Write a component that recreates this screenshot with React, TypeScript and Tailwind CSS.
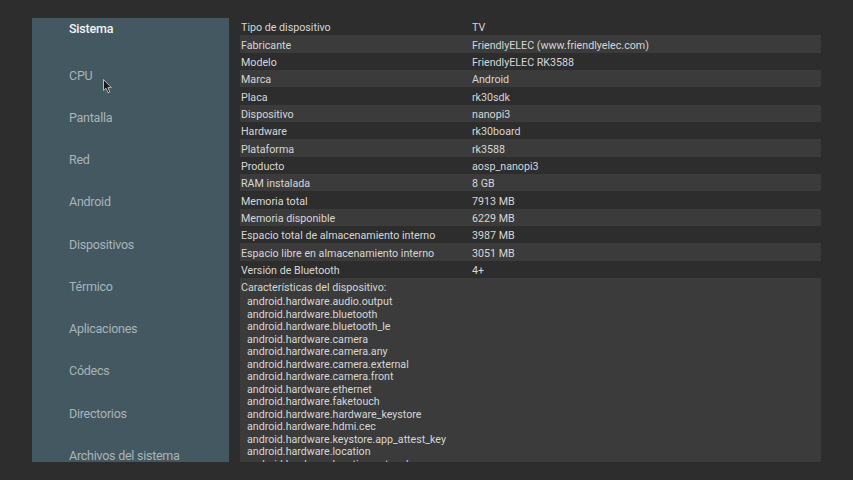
import React from "react";

const rows: [string, string][] = [
  ["Tipo de dispositivo", "TV"],
  ["Fabricante", "FriendlyELEC (www.friendlyelec.com)"],
  ["Modelo", "FriendlyELEC RK3588"],
  ["Marca", "Android"],
  ["Placa", "rk30sdk"],
  ["Dispositivo", "nanopi3"],
  ["Hardware", "rk30board"],
  ["Plataforma", "rk3588"],
  ["Producto", "aosp_nanopi3"],
  ["RAM instalada", "8 GB"],
  ["Memoria total", "7913 MB"],
  ["Memoria disponible", "6229 MB"],
  ["Espacio total de almacenamiento interno", "3987 MB"],
  ["Espacio libre en almacenamiento interno", "3051 MB"],
  ["Versión de Bluetooth", "4+"],
];

const features = [
  "android.hardware.audio.output",
  "android.hardware.bluetooth",
  "android.hardware.bluetooth_le",
  "android.hardware.camera",
  "android.hardware.camera.any",
  "android.hardware.camera.external",
  "android.hardware.camera.front",
  "android.hardware.ethernet",
  "android.hardware.faketouch",
  "android.hardware.hardware_keystore",
  "android.hardware.hdmi.cec",
  "android.hardware.keystore.app_attest_key",
  "android.hardware.location",
  "android.hardware.location.network",
];

const menu = [
  "CPU",
  "Pantalla",
  "Red",
  "Android",
  "Dispositivos",
  "Térmico",
  "Aplicaciones",
  "Códecs",
  "Directorios",
  "Archivos del sistema",
];

export default function App() {
  return (
    <div
      className="relative w-[853px] h-[480px] bg-[#2d2d2d] flex pt-[18px] pl-[32px] overflow-hidden"
      style={{ fontFamily: "Roboto, 'Noto Sans', sans-serif" }}
    >
      <div className="w-[197px] h-[444px] bg-[#435860] overflow-hidden flex flex-col pl-[37px]">
        <div className="h-[20px] pt-[2px] flex items-center text-[12.5px] tracking-[-0.2px] font-medium text-[#f2f4f5]">
          Sistema
        </div>
        <div className="mt-[15.9px] flex flex-col">
          {menu.map((m) => (
            <div
              key={m}
              className="h-[42.25px] shrink-0 pt-[2px] flex items-center text-[12.5px] tracking-[-0.25px] text-[#a9b4b9] whitespace-nowrap"
            >
              {m}
            </div>
          ))}
        </div>
      </div>

      <div className="ml-[11px] w-[581px] h-[444px] flex flex-col">
        {rows.map(([k, v], i) => (
          <div
            key={k}
            className={`h-[17.35px] shrink-0 pt-[3px] flex items-center text-[10.7px] text-[#d6d6d6] ${
              i % 2 === 1 ? "bg-[#3b3b3b]" : ""
            }`}
          >
            <div className="w-[232px] pl-[1px] whitespace-nowrap">{k}</div>
            <div className="whitespace-nowrap">{v}</div>
          </div>
        ))}
        <div className="flex-1 bg-[#3b3b3b] overflow-hidden flex flex-col">
          <div className="h-[17px] shrink-0 pt-[3px] flex items-center pl-[1px] text-[10.7px] text-[#d6d6d6]">
            Características del dispositivo:
          </div>
          <div className="flex flex-col pl-[7px] pt-[1px]">
            {features.map((f) => (
              <div
                key={f}
                className="h-[12.5px] shrink-0 leading-[12.5px] text-[10.65px] text-[#d6d6d6] whitespace-nowrap"
              >
                {f}
              </div>
            ))}
          </div>
        </div>
      </div>

      <svg
        className="absolute left-[103px] top-[79px]"
        width="10"
        height="15"
        viewBox="0 0 10 15"
      >
        <path
          d="M0.5 0.5 L0.5 11.5 L3 9.2 L5 13.8 L6.8 13 L4.9 8.6 L8.3 8.6 Z"
          fill="#1a1a1a"
          stroke="#c8c8c8"
          strokeWidth="0.9"
          strokeLinejoin="round"
        />
      </svg>
    </div>
  );
}
